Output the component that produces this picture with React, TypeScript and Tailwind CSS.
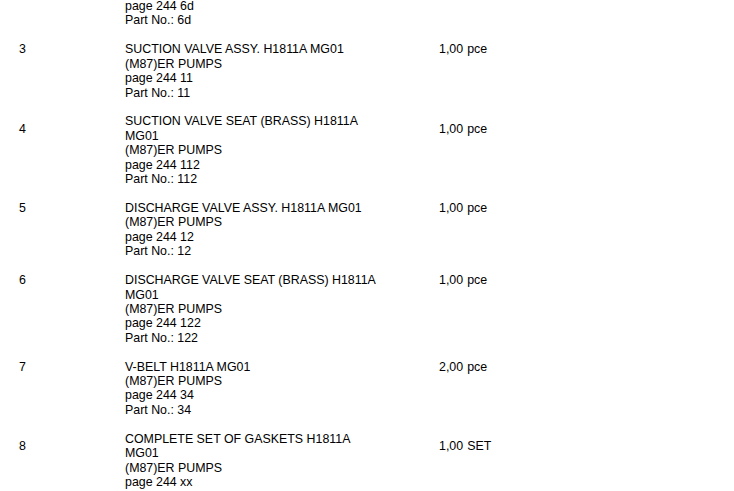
interface Position {
  nr: string
  description: string
  qty: string
  unit: string
  lines: string[]
  topAligned?: boolean
}

const positions: Position[] = [
  {
    nr: "3",
    description: "SUCTION VALVE ASSY. H1811A MG01",
    qty: "1,00",
    unit: "pce",
    lines: ["(M87)ER PUMPS", "page 244 11", "Part No.: 11"],
  },
  {
    nr: "4",
    description: "SUCTION VALVE SEAT (BRASS) H1811A MG01",
    qty: "1,00",
    unit: "pce",
    lines: ["(M87)ER PUMPS", "page 244 112", "Part No.: 112"],
  },
  {
    nr: "5",
    description: "DISCHARGE VALVE ASSY. H1811A MG01",
    qty: "1,00",
    unit: "pce",
    lines: ["(M87)ER PUMPS", "page 244 12", "Part No.: 12"],
  },
  {
    nr: "6",
    description: "DISCHARGE VALVE SEAT (BRASS) H1811A MG01",
    qty: "1,00",
    unit: "pce",
    lines: ["(M87)ER PUMPS", "page 244 122", "Part No.: 122"],
    topAligned: true,
  },
  {
    nr: "7",
    description: "V-BELT H1811A MG01",
    qty: "2,00",
    unit: "pce",
    lines: ["(M87)ER PUMPS", "page 244 34", "Part No.: 34"],
  },
  {
    nr: "8",
    description: "COMPLETE SET OF GASKETS H1811A MG01",
    qty: "1,00",
    unit: "SET",
    // rest of this position continues below the fold
    lines: ["(M87)ER PUMPS", "page 244 xx"],
  },
]

function PositionRow({ pos }: { pos: Position }) {
  const align = pos.topAligned ? "items-start" : "items-center"

  return (
    <div className="mt-[14.45px] grid grid-cols-[106px_254px_60px_auto]">
      <div className={`flex ${align}`}>{pos.nr}</div>
      <div>{pos.description}</div>
      <div />
      <div className={`flex ${align} gap-[4px]`}>
        <span>{pos.qty}</span>
        <span>{pos.unit}</span>
      </div>

      {pos.lines.map((line) => (
        <div key={line} className="col-start-2 col-span-2 whitespace-nowrap">
          {line}
        </div>
      ))}
    </div>
  )
}

function App() {
  return (
    <div className="h-[491px] w-[734px] overflow-hidden bg-white text-black">
      <div className="-mt-[1px] pl-[19px] font-['Liberation_Sans',Arial,sans-serif] text-[12.4px] leading-[14.42px]">
        <div className="grid grid-cols-[106px_auto]">
          <div className="col-start-2">page 244 6d</div>
          <div className="col-start-2">Part No.: 6d</div>
        </div>

        {positions.map((pos) => (
          <PositionRow key={pos.nr} pos={pos} />
        ))}
      </div>
    </div>
  )
}

export default App
